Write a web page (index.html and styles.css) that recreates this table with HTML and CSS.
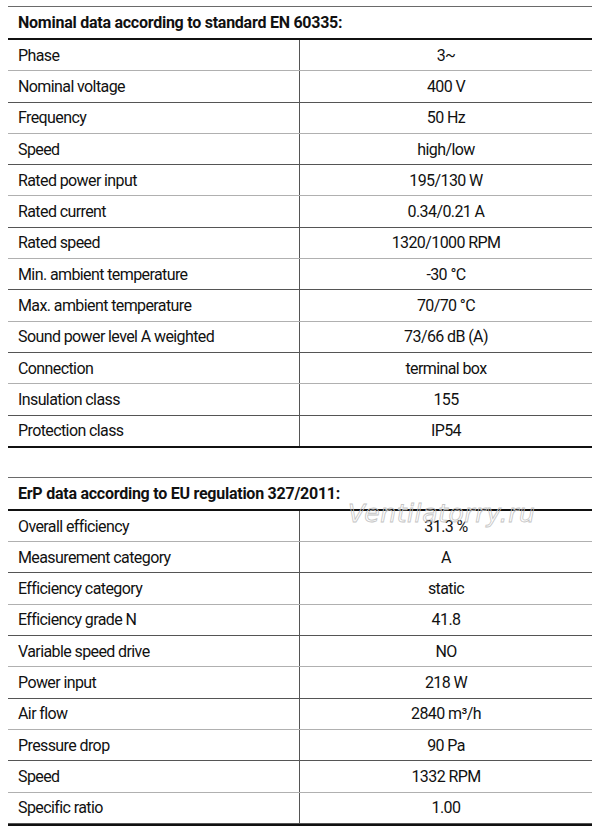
FILE: index.html
```html
<!DOCTYPE html>
<html>
<head>
<meta charset="utf-8">
<link rel="stylesheet" href="styles.css">
</head>
<body>
<div class="page">
  <section class="spec">
    <div class="spec-head">Nominal data according to standard EN 60335:</div>
    <div class="row"><div class="key">Phase</div><div class="val">3~</div></div>
    <div class="row"><div class="key">Nominal voltage</div><div class="val">400 V</div></div>
    <div class="row"><div class="key">Frequency</div><div class="val">50 Hz</div></div>
    <div class="row"><div class="key">Speed</div><div class="val">high/low</div></div>
    <div class="row"><div class="key">Rated power input</div><div class="val">195/130 W</div></div>
    <div class="row"><div class="key">Rated current</div><div class="val">0.34/0.21 A</div></div>
    <div class="row"><div class="key">Rated speed</div><div class="val">1320/1000 RPM</div></div>
    <div class="row"><div class="key">Min. ambient temperature</div><div class="val">-30 °C</div></div>
    <div class="row"><div class="key">Max. ambient temperature</div><div class="val">70/70 °C</div></div>
    <div class="row"><div class="key">Sound power level A weighted</div><div class="val">73/66 dB (A)</div></div>
    <div class="row"><div class="key">Connection</div><div class="val">terminal box</div></div>
    <div class="row"><div class="key">Insulation class</div><div class="val">155</div></div>
    <div class="row"><div class="key">Protection class</div><div class="val">IP54</div></div>
  </section>
  <section class="spec second">
    <div class="spec-head">ErP data according to EU regulation 327/2011:</div>
    <div class="row"><div class="key">Overall efficiency</div><div class="val">31.3 %</div></div>
    <div class="row"><div class="key">Measurement category</div><div class="val">A</div></div>
    <div class="row"><div class="key">Efficiency category</div><div class="val">static</div></div>
    <div class="row"><div class="key">Efficiency grade N</div><div class="val">41.8</div></div>
    <div class="row"><div class="key">Variable speed drive</div><div class="val">NO</div></div>
    <div class="row"><div class="key">Power input</div><div class="val">218 W</div></div>
    <div class="row"><div class="key">Air flow</div><div class="val">2840 m³/h</div></div>
    <div class="row"><div class="key">Pressure drop</div><div class="val">90 Pa</div></div>
    <div class="row"><div class="key">Speed</div><div class="val">1332 RPM</div></div>
    <div class="row"><div class="key">Specific ratio</div><div class="val">1.00</div></div>
    <div class="watermark">Ventilatorry.ru</div>
  </section>
</div>
</body>
</html>
```

FILE: styles.css
```css
html, body {
  margin: 0;
  padding: 0;
  background: #fff;
}
body {
  font-family: "Roboto", "Liberation Sans", sans-serif;
  font-size: 16px;
  letter-spacing: -0.6px;
  color: #111;
}
.page {
  padding: 6px 8px 0 8px;
  width: 584px;
}
.spec {
  position: relative;
  border-top: 1px solid #6a6a6a;
  border-bottom: 2px solid #111;
}
.spec.second {
  margin-top: 29px;
}
.spec-head {
  height: 31px;
  display: flex;
  align-items: center;
  padding-left: 10px;
  font-weight: bold;
  letter-spacing: -0.25px;
  border-bottom: 2px solid #111;
}
.row {
  display: grid;
  grid-template-columns: 292px 1fr;
  height: 30.3px;
  border-bottom: 1px solid #b0b0b0;
}
.row:nth-of-type(2n+1) {
  border-bottom-color: #555;
}
.row:last-of-type {
  border-bottom: none;
}
.key {
  display: flex;
  align-items: center;
  padding-left: 10px;
  border-right: 1px solid #555;
}
.val {
  display: flex;
  align-items: center;
  justify-content: center;
}
.watermark {
  position: absolute;
  left: 340px;
  top: 23px;
  font-family: "DejaVu Sans", sans-serif;
  font-style: italic;
  font-size: 25px;
  letter-spacing: 0.6px;
  line-height: 1;
  color: transparent;
  -webkit-text-stroke: 0.8px #c4c4c4;
  pointer-events: none;
}
```
